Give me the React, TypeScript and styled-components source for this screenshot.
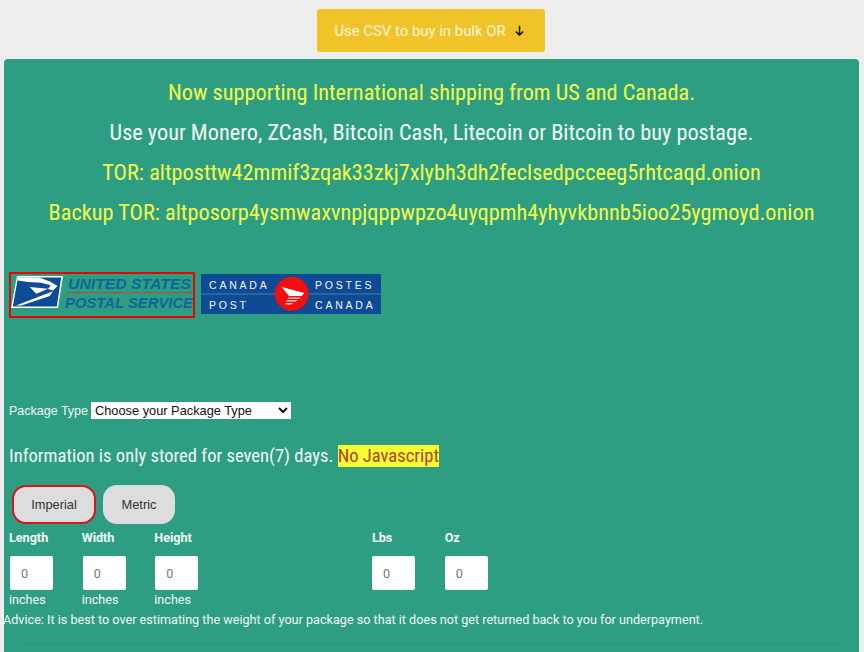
import React from 'react';
import styled, { createGlobalStyle } from 'styled-components';

const GlobalStyle = createGlobalStyle`
  html, body {
    margin: 0;
    padding: 0;
    background: #eeeeee;
    height: 652px;
    overflow: hidden;
    font-family: Roboto, "Liberation Sans", sans-serif;
  }
  * { box-sizing: border-box; }
`;

const Page = styled.div`
  width: 864px;
  height: 652px;
  overflow: hidden;
`;

const TopBar = styled.div`
  display: flex;
  justify-content: center;
  padding: 9px 2px 7px 0;
  height: 59px;
`;

const BulkButton = styled.button`
  display: flex;
  align-items: center;
  justify-content: center;
  gap: 7px;
  width: 228px;
  height: 43px;
  padding: 0 2px 0 0;
  border: none;
  border-radius: 3px;
  background: #f0c429;
  color: #fdf6dc;
  font-family: Roboto, sans-serif;
  font-size: 14.9px;
`;

const Panel = styled.main`
  width: 855px;
  height: 620px;
  margin-left: 4px;
  padding-top: 18px;
  background: #2e9e82;
  border-radius: 4px 4px 0 0;
`;

const Banner = styled.div`
  display: flex;
  flex-direction: column;
  align-items: center;
  gap: 10px;
`;

const BannerLine = styled.h2<{ $tone: 'yellow' | 'white' }>`
  margin: 0;
  height: 30px;
  line-height: 30px;
  font-size: 22.3px;
  font-weight: 400;
  font-stretch: 75%;
  white-space: nowrap;
  color: ${({ $tone }) => ($tone === 'yellow' ? '#f5fb4a' : '#f4fbf6')};
`;

const Carriers = styled.div`
  display: flex;
  align-items: flex-start;
  gap: 6px;
  margin: 45px 0 0 5px;
  height: 130px;
`;

const CarrierLogo = styled.svg<{ $selected?: boolean }>`
  display: block;
  margin-top: ${({ $selected }) => ($selected ? '0' : '2px')};
  outline: ${({ $selected }) => ($selected ? '2px solid #f00000' : 'none')};
  outline-offset: -2px;
`;

const PackageRow = styled.div`
  display: flex;
  align-items: center;
  gap: 3px;
  margin: 0 0 0 5px;
  height: 17px;
  font-family: "Liberation Sans", sans-serif;
  font-size: 12.5px;
  color: #eef7f3;
`;

const PackageSelect = styled.select`
  width: 200px;
  height: 17px;
  padding: 0;
  border: none;
  border-radius: 0;
  background: #ffffff;
  color: #111111;
  font-family: "Liberation Sans", sans-serif;
  font-size: 12.8px;
`;

const Notice = styled.p`
  margin: 25px 0 0 5px;
  height: 24px;
  line-height: 24px;
  font-size: 18.6px;
  font-stretch: 75%;
  color: #f0f8f4;
`;

const NoJs = styled.span`
  background: #fbfb32;
  color: #a8481e;
`;

const UnitTabs = styled.div`
  display: flex;
  gap: 7px;
  margin: 17px 0 0 8px;
`;

const UnitTab = styled.button<{ $active?: boolean }>`
  width: ${({ $active }) => ($active ? '84px' : '72px')};
  height: 39px;
  padding: 0;
  border: ${({ $active }) => ($active ? '2px solid #d9141c' : 'none')};
  border-radius: 14px;
  background: #dddddd;
  color: #333333;
  font-family: "Liberation Sans", sans-serif;
  font-size: 12.8px;
`;

const Measures = styled.div`
  display: flex;
  margin: 5px 0 0 5px;
`;

const MeasureGroup = styled.div<{ $left?: number }>`
  display: flex;
  gap: 28.67px;
  margin-left: ${({ $left }) => $left ?? 0}px;
`;

const Measure = styled.label`
  display: flex;
  flex-direction: column;
  width: 44px;
  color: #f0f8f4;
  font-size: 12.6px;
`;

const MeasureName = styled.span`
  height: 18px;
  line-height: 18px;
  font-weight: 700;
  white-space: nowrap;
`;

const MeasureInput = styled.input<{ $flush?: boolean }>`
  width: 43px;
  height: 34px;
  margin: 9px 0 0 ${({ $flush }) => ($flush ? '0' : '1px')};
  padding: 0 0 0 11px;
  border: none;
  border-radius: 2px;
  background: #ffffff;
  color: #777777;
  font-family: Roboto, sans-serif;
  font-size: 12.6px;
`;

const MeasureUnit = styled.span`
  height: 18px;
  margin-top: 1px;
  line-height: 18px;
`;

const Advice = styled.p`
  margin: 2px 0 0 -1px;
  height: 18px;
  line-height: 18px;
  font-size: 12.64px;
  color: #eef7f3;
  white-space: nowrap;
`;

const Divider = styled.hr`
  margin: 15px 20px 0;
  border: none;
  border-top: 1px solid #2b957b;
`;

const UspsLogo = () => (
  <CarrierLogo $selected width="186" height="46" viewBox="0 0 186 46">
    <path d="M8 4h46l-5 32H2z" fill="#fff" />
    <path d="M9 5.5h43.2L47.8 34.5H3.8z" fill="#0f4c96" />
    <path d="M9 5.5h21l11 4 7.5 4.5-4.5 4.5-5-1.5 2.7-3.7-9.5-2.6-13-.7-10.5-1.5z" fill="#fff" />
    <path d="M20.7 15l18.3 1.7-11.7 5z" fill="#fff" />
    <path d="M7 33.5l37-14.2-3.3 4.7-28.4 9.5z" fill="#fff" />
    <path d="M58 20.7h125" stroke="#c2403f" strokeWidth="1" />
    <g fontFamily="Liberation Sans, sans-serif" fontSize="15.4" fontWeight="700" fontStyle="italic" fill="#12649a">
      <text x="59" y="16.5" textLength="123" lengthAdjust="spacingAndGlyphs">UNITED STATES</text>
      <text x="56" y="35.5" textLength="128" lengthAdjust="spacingAndGlyphs">POSTAL SERVICE</text>
    </g>
  </CarrierLogo>
);

const CanadaPostLogo = () => (
  <CarrierLogo width="180" height="40" viewBox="0 0 180 40">
    <rect width="180" height="40" fill="#0f4a94" />
    <path d="M0 20h180" stroke="#3f86a6" strokeWidth="1" />
    <g fontFamily="Liberation Sans, sans-serif" fontSize="10.5" fill="#f2f6fa" letterSpacing="2.8">
      <text x="8" y="15">CANADA</text>
      <text x="8" y="35">POST</text>
      <text x="114" y="15">POSTES</text>
      <text x="114" y="35">CANADA</text>
    </g>
    <circle cx="90.7" cy="19.7" r="17" fill="#f01010" />
    <path d="M80.7 13l22.6 6-2.6 3H88z" fill="#fff" />
    <path d="M87.3 23.4h12.4l-1.4 1.4H86.6zM85.8 26.2h10.6l-1.4 1.4H85.2zM84.6 29h7.8l-2.4 1.6h-5.4z" fill="#ffd9d9" />
  </CarrierLogo>
);

const App: React.FC = () => {
  return (
    <Page>
      <GlobalStyle />
      <TopBar>
        <BulkButton>
          Use CSV to buy in bulk OR
          <svg width="13" height="13" viewBox="0 0 14 14" fill="none" stroke="#1a1408" strokeWidth="1.6">
            <path d="M7 2v10M3 8l4 4 4-4" />
          </svg>
        </BulkButton>
      </TopBar>
      <Panel>
        <Banner>
          <BannerLine $tone="yellow">Now supporting International shipping from US and Canada.</BannerLine>
          <BannerLine $tone="white">Use your Monero, ZCash, Bitcoin Cash, Litecoin or Bitcoin to buy postage.</BannerLine>
          <BannerLine $tone="yellow">TOR: altposttw42mmif3zqak33zkj7xlybh3dh2feclsedpcceeg5rhtcaqd.onion</BannerLine>
          <BannerLine $tone="yellow">Backup TOR: altposorp4ysmwaxvnpjqppwpzo4uyqpmh4yhyvkbnnb5ioo25ygmoyd.onion</BannerLine>
        </Banner>
        <Carriers>
          <UspsLogo />
          <CanadaPostLogo />
        </Carriers>
        <PackageRow>
          Package Type
          <PackageSelect defaultValue="">
            <option value="">Choose your Package Type</option>
          </PackageSelect>
        </PackageRow>
        <Notice>
          Information is only stored for seven(7) days. <NoJs>No Javascript</NoJs>
        </Notice>
        <UnitTabs>
          <UnitTab $active>Imperial</UnitTab>
          <UnitTab>Metric</UnitTab>
        </UnitTabs>
        <Measures>
          <MeasureGroup>
            {['Length', 'Width', 'Height'].map((name) => (
              <Measure key={name}>
                <MeasureName>{name}</MeasureName>
                <MeasureInput defaultValue="0" />
                <MeasureUnit>inches</MeasureUnit>
              </Measure>
            ))}
          </MeasureGroup>
          <MeasureGroup $left={173.67}>
            {['Lbs', 'Oz'].map((name) => (
              <Measure key={name}>
                <MeasureName>{name}</MeasureName>
                <MeasureInput $flush defaultValue="0" />
              </Measure>
            ))}
          </MeasureGroup>
        </Measures>
        <Advice>Advice: It is best to over estimating the weight of your package so that it does not get returned back to you for underpayment.</Advice>
        <Divider />
      </Panel>
    </Page>
  );
};

export default App;
